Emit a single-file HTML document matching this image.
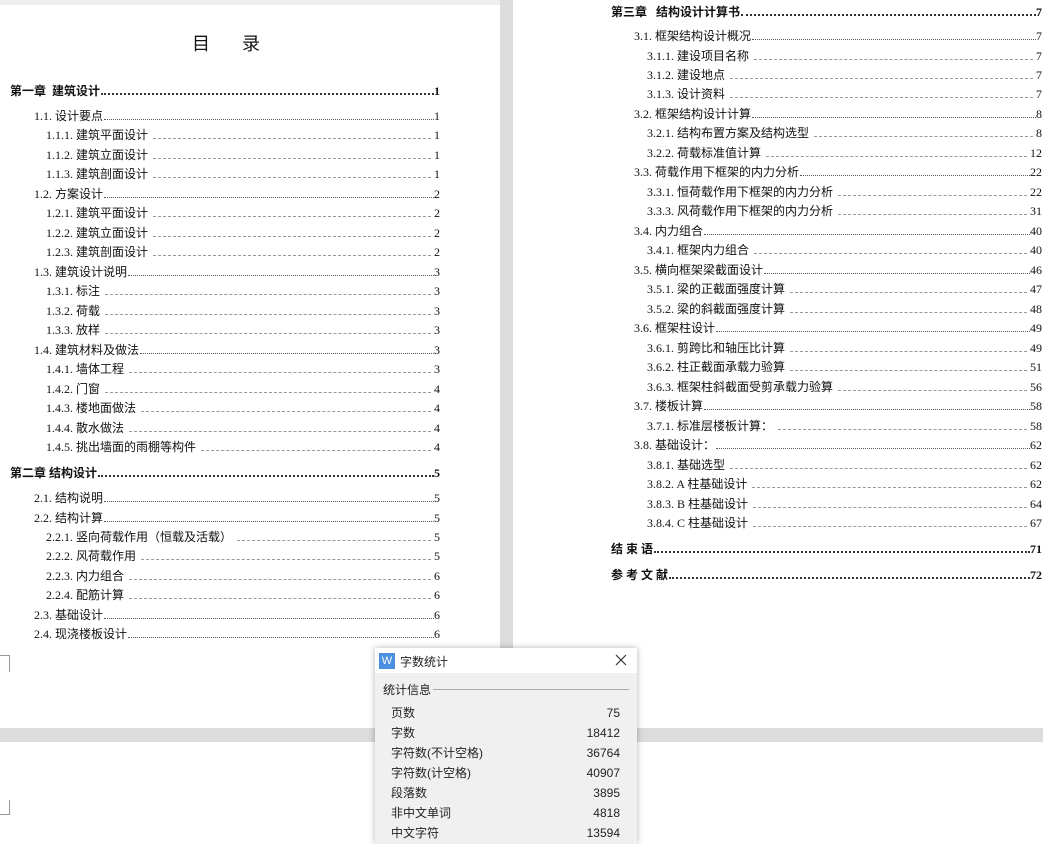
<!DOCTYPE html>
<html><head><meta charset="utf-8"><style>
*{margin:0;padding:0;box-sizing:border-box}
body{width:1043px;height:844px;background:#fff;position:relative;overflow:hidden;font-family:"Liberation Serif","Noto Sans CJK SC",serif;color:#111}
.r{position:absolute;height:16px;display:flex;align-items:flex-end;font-size:12px;line-height:14px;white-space:nowrap}
.r .t{padding-right:1px}
.r .d{flex:1;border-bottom:1px dotted #555;margin-bottom:3px;height:1px}
.r.l3 .d{border-bottom:1px dashed #999;margin-left:4px;margin-right:3px}
.r.c{font-weight:bold}
.r.c .d{border-bottom:2px dotted #333}
.sans{font-family:"Liberation Sans","Noto Sans CJK SC",sans-serif}
</style></head><body>
<div style="position:absolute;left:0;top:0;width:500px;height:5px;background:#eee"></div>
<div style="position:absolute;left:500px;top:0;width:13px;height:728px;background:#dcdcdc"></div>
<div style="position:absolute;left:0;top:728px;width:1043px;height:14px;background:#dcdcdc"></div>
<div style="position:absolute;left:192px;top:30px;font-size:18px;font-family:'Noto Sans CJK SC',sans-serif;letter-spacing:32px">目录</div>
<div style="position:absolute;left:0;top:655px;width:10px;height:17px;border-right:1px solid #999;border-top:1px solid #999"></div>
<div style="position:absolute;left:0;top:800px;width:10px;height:15px;border-right:1px solid #999;border-bottom:1px solid #999"></div>

<div class="r c" style="left:10px;width:430px;top:82px"><span class="t">第一章&nbsp;&nbsp;建筑设计</span><span class="d"></span>1</div>
<div class="r" style="left:34px;width:406px;top:107px"><span class="t">1.1. 设计要点</span><span class="d"></span>1</div>
<div class="r l3" style="left:46px;width:394px;top:126px"><span class="t">1.1.1. 建筑平面设计</span><span class="d"></span>1</div>
<div class="r l3" style="left:46px;width:394px;top:146px"><span class="t">1.1.2. 建筑立面设计</span><span class="d"></span>1</div>
<div class="r l3" style="left:46px;width:394px;top:165px"><span class="t">1.1.3. 建筑剖面设计</span><span class="d"></span>1</div>
<div class="r" style="left:34px;width:406px;top:185px"><span class="t">1.2. 方案设计</span><span class="d"></span>2</div>
<div class="r l3" style="left:46px;width:394px;top:204px"><span class="t">1.2.1. 建筑平面设计</span><span class="d"></span>2</div>
<div class="r l3" style="left:46px;width:394px;top:224px"><span class="t">1.2.2. 建筑立面设计</span><span class="d"></span>2</div>
<div class="r l3" style="left:46px;width:394px;top:243px"><span class="t">1.2.3. 建筑剖面设计</span><span class="d"></span>2</div>
<div class="r" style="left:34px;width:406px;top:263px"><span class="t">1.3. 建筑设计说明</span><span class="d"></span>3</div>
<div class="r l3" style="left:46px;width:394px;top:282px"><span class="t">1.3.1. 标注</span><span class="d"></span>3</div>
<div class="r l3" style="left:46px;width:394px;top:302px"><span class="t">1.3.2. 荷载</span><span class="d"></span>3</div>
<div class="r l3" style="left:46px;width:394px;top:321px"><span class="t">1.3.3. 放样</span><span class="d"></span>3</div>
<div class="r" style="left:34px;width:406px;top:341px"><span class="t">1.4. 建筑材料及做法</span><span class="d"></span>3</div>
<div class="r l3" style="left:46px;width:394px;top:360px"><span class="t">1.4.1. 墙体工程</span><span class="d"></span>3</div>
<div class="r l3" style="left:46px;width:394px;top:380px"><span class="t">1.4.2. 门窗</span><span class="d"></span>4</div>
<div class="r l3" style="left:46px;width:394px;top:399px"><span class="t">1.4.3. 楼地面做法</span><span class="d"></span>4</div>
<div class="r l3" style="left:46px;width:394px;top:419px"><span class="t">1.4.4. 散水做法</span><span class="d"></span>4</div>
<div class="r l3" style="left:46px;width:394px;top:438px"><span class="t">1.4.5. 挑出墙面的雨棚等构件</span><span class="d"></span>4</div>
<div class="r c" style="left:10px;width:430px;top:464px"><span class="t">第二章 结构设计</span><span class="d"></span>5</div>
<div class="r" style="left:34px;width:406px;top:489px"><span class="t">2.1. 结构说明</span><span class="d"></span>5</div>
<div class="r" style="left:34px;width:406px;top:509px"><span class="t">2.2. 结构计算</span><span class="d"></span>5</div>
<div class="r l3" style="left:46px;width:394px;top:528px"><span class="t">2.2.1. 竖向荷载作用（恒载及活载）</span><span class="d"></span>5</div>
<div class="r l3" style="left:46px;width:394px;top:547px"><span class="t">2.2.2. 风荷载作用</span><span class="d"></span>5</div>
<div class="r l3" style="left:46px;width:394px;top:567px"><span class="t">2.2.3. 内力组合</span><span class="d"></span>6</div>
<div class="r l3" style="left:46px;width:394px;top:586px"><span class="t">2.2.4. 配筋计算</span><span class="d"></span>6</div>
<div class="r" style="left:34px;width:406px;top:606px"><span class="t">2.3. 基础设计</span><span class="d"></span>6</div>
<div class="r" style="left:34px;width:406px;top:625px"><span class="t">2.4. 现浇楼板设计</span><span class="d"></span>6</div>

<div class="r c" style="left:611px;width:431px;top:3px"><span class="t">第三章&nbsp;&nbsp;&nbsp;结构设计计算书</span><span class="d"></span>7</div>
<div class="r" style="left:634px;width:408px;top:27px"><span class="t">3.1. 框架结构设计概况</span><span class="d"></span>7</div>
<div class="r l3" style="left:647px;width:395px;top:47px"><span class="t">3.1.1. 建设项目名称</span><span class="d"></span>7</div>
<div class="r l3" style="left:647px;width:395px;top:66px"><span class="t">3.1.2. 建设地点</span><span class="d"></span>7</div>
<div class="r l3" style="left:647px;width:395px;top:85px"><span class="t">3.1.3. 设计资料</span><span class="d"></span>7</div>
<div class="r" style="left:634px;width:408px;top:105px"><span class="t">3.2. 框架结构设计计算</span><span class="d"></span>8</div>
<div class="r l3" style="left:647px;width:395px;top:124px"><span class="t">3.2.1. 结构布置方案及结构选型</span><span class="d"></span>8</div>
<div class="r l3" style="left:647px;width:395px;top:144px"><span class="t">3.2.2. 荷载标准值计算</span><span class="d"></span>12</div>
<div class="r" style="left:634px;width:408px;top:163px"><span class="t">3.3. 荷载作用下框架的内力分析</span><span class="d"></span>22</div>
<div class="r l3" style="left:647px;width:395px;top:183px"><span class="t">3.3.1. 恒荷载作用下框架的内力分析</span><span class="d"></span>22</div>
<div class="r l3" style="left:647px;width:395px;top:202px"><span class="t">3.3.3. 风荷载作用下框架的内力分析</span><span class="d"></span>31</div>
<div class="r" style="left:634px;width:408px;top:222px"><span class="t">3.4. 内力组合</span><span class="d"></span>40</div>
<div class="r l3" style="left:647px;width:395px;top:241px"><span class="t">3.4.1. 框架内力组合</span><span class="d"></span>40</div>
<div class="r" style="left:634px;width:408px;top:261px"><span class="t">3.5. 横向框架梁截面设计</span><span class="d"></span>46</div>
<div class="r l3" style="left:647px;width:395px;top:280px"><span class="t">3.5.1. 梁的正截面强度计算</span><span class="d"></span>47</div>
<div class="r l3" style="left:647px;width:395px;top:300px"><span class="t">3.5.2. 梁的斜截面强度计算</span><span class="d"></span>48</div>
<div class="r" style="left:634px;width:408px;top:319px"><span class="t">3.6. 框架柱设计</span><span class="d"></span>49</div>
<div class="r l3" style="left:647px;width:395px;top:339px"><span class="t">3.6.1. 剪跨比和轴压比计算</span><span class="d"></span>49</div>
<div class="r l3" style="left:647px;width:395px;top:358px"><span class="t">3.6.2. 柱正截面承载力验算</span><span class="d"></span>51</div>
<div class="r l3" style="left:647px;width:395px;top:378px"><span class="t">3.6.3. 框架柱斜截面受剪承载力验算</span><span class="d"></span>56</div>
<div class="r" style="left:634px;width:408px;top:397px"><span class="t">3.7. 楼板计算</span><span class="d"></span>58</div>
<div class="r l3" style="left:647px;width:395px;top:417px"><span class="t">3.7.1. 标准层楼板计算：</span><span class="d"></span>58</div>
<div class="r" style="left:634px;width:408px;top:436px"><span class="t">3.8. 基础设计：</span><span class="d"></span>62</div>
<div class="r l3" style="left:647px;width:395px;top:456px"><span class="t">3.8.1. 基础选型</span><span class="d"></span>62</div>
<div class="r l3" style="left:647px;width:395px;top:475px"><span class="t">3.8.2. A 柱基础设计</span><span class="d"></span>62</div>
<div class="r l3" style="left:647px;width:395px;top:495px"><span class="t">3.8.3. B 柱基础设计</span><span class="d"></span>64</div>
<div class="r l3" style="left:647px;width:395px;top:514px"><span class="t">3.8.4. C 柱基础设计</span><span class="d"></span>67</div>
<div class="r c" style="left:611px;width:431px;top:540px"><span class="t">结&nbsp;束&nbsp;语</span><span class="d"></span>71</div>
<div class="r c" style="left:611px;width:431px;top:566px"><span class="t">参&nbsp;考&nbsp;文&nbsp;献</span><span class="d"></span>72</div>

<div class="sans" style="position:absolute;left:375px;top:648px;width:262px;height:196px;background:#f0f0f0;box-shadow:0 0 6px rgba(0,0,0,.3);font-size:12px;color:#222">
  <div style="height:25px;background:#fff;position:relative">
    <div style="position:absolute;left:4px;top:5px;width:16px;height:16px;background:#4a8fe0;color:#fff;font-size:11px;text-align:center;line-height:16px">W</div>
    <div style="position:absolute;left:25px;top:5px">字数统计</div>
    <svg style="position:absolute;left:240px;top:6px" width="12" height="12"><path d="M1 1L11 11M11 1L1 11" stroke="#333" stroke-width="1.2"/></svg>
  </div>
  <div style="position:absolute;left:8px;top:33px">统计信息</div>
  <div style="position:absolute;left:58px;top:41px;width:196px;height:1px;background:#aaa"></div>
  <div style="position:absolute;left:16px;top:55px;width:229px;line-height:20px">
    <div style="display:flex;justify-content:space-between"><span>页数</span><span>75</span></div>
    <div style="display:flex;justify-content:space-between"><span>字数</span><span>18412</span></div>
    <div style="display:flex;justify-content:space-between"><span>字符数(不计空格)</span><span>36764</span></div>
    <div style="display:flex;justify-content:space-between"><span>字符数(计空格)</span><span>40907</span></div>
    <div style="display:flex;justify-content:space-between"><span>段落数</span><span>3895</span></div>
    <div style="display:flex;justify-content:space-between"><span>非中文单词</span><span>4818</span></div>
    <div style="display:flex;justify-content:space-between"><span>中文字符</span><span>13594</span></div>
  </div>
</div>
</body></html>
